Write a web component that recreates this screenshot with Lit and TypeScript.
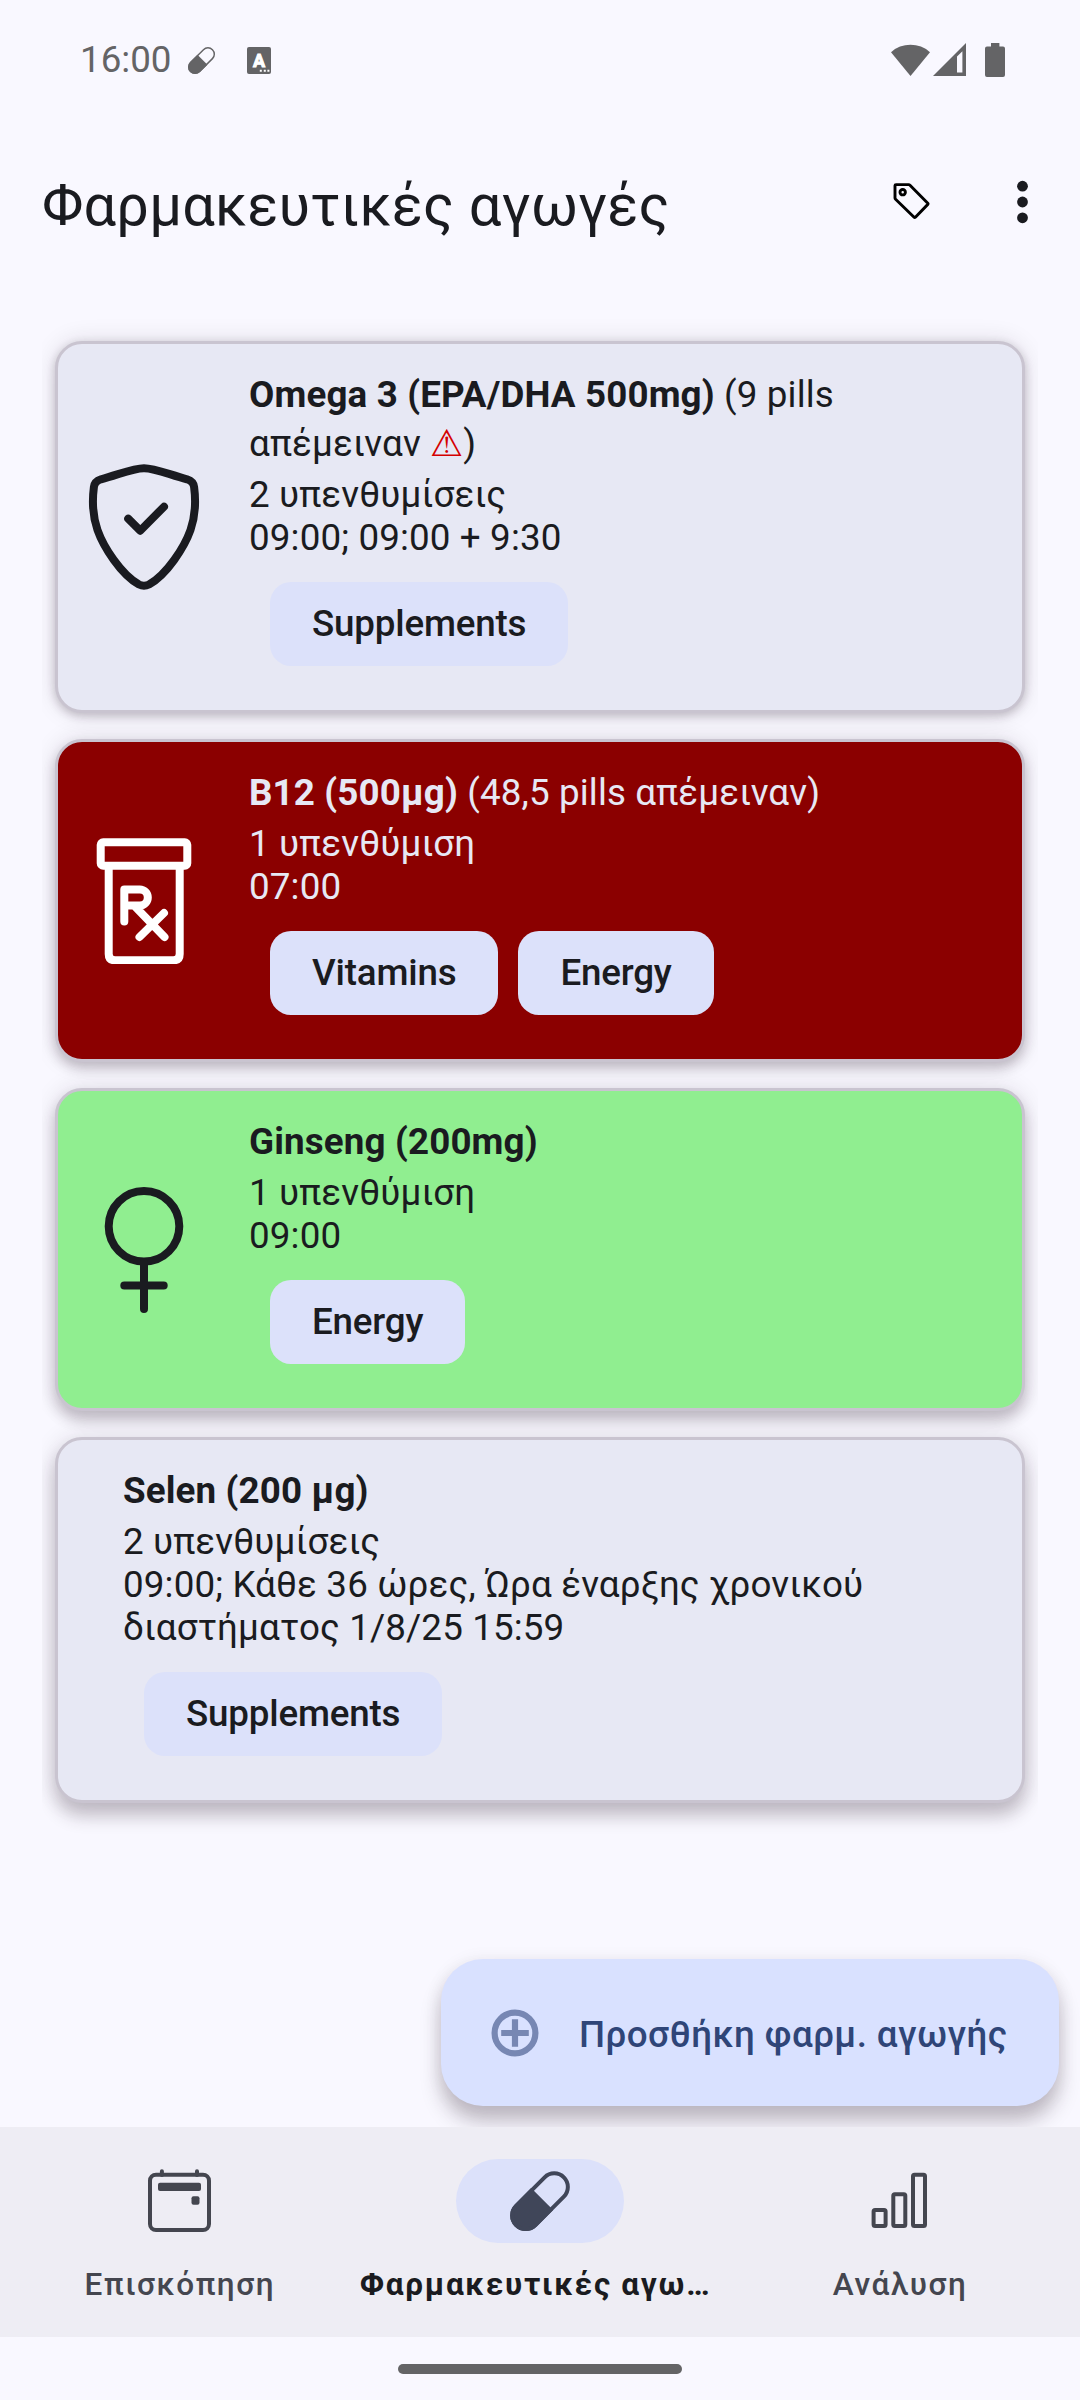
import { LitElement, html, svg, css, nothing } from "lit";
import { customElement, property } from "lit/decorators.js";
import { classMap } from "lit/directives/class-map.js";

type IconName = "shield" | "bottle" | "female" | "none";

interface Medicine {
  name: string;
  stock?: string;
  warning?: boolean;
  reminders: string;
  times: string;
  tags: string[];
  icon: IconName;
  tone: string;
}

const medicines: Medicine[] = [
  {
    name: "Omega 3 (EPA/DHA 500mg)",
    stock: "9 pills απέμειναν",
    warning: true,
    reminders: "2 υπενθυμίσεις",
    times: "09:00; 09:00 + 9:30",
    tags: ["Supplements"],
    icon: "shield",
    tone: "plain lift1",
  },
  {
    name: "B12 (500µg)",
    stock: "48,5 pills απέμειναν",
    reminders: "1 υπενθύμιση",
    times: "07:00",
    tags: ["Vitamins", "Energy"],
    icon: "bottle",
    tone: "red lift2",
  },
  {
    name: "Ginseng (200mg)",
    reminders: "1 υπενθύμιση",
    times: "09:00",
    tags: ["Energy"],
    icon: "female",
    tone: "green lift3",
  },
  {
    name: "Selen (200 µg)",
    reminders: "2 υπενθυμίσεις",
    times: "09:00; Κάθε 36 ώρες, Ώρα έναρξης χρονικού διαστήματος 1/8/25 15:59",
    tags: ["Supplements"],
    icon: "none",
    tone: "plain lift4",
  },
];

const capsule = (stroke: number) => svg`
  <g transform="translate(32 32.2) rotate(-45)">
    <path d="M3 -15.6H-20.15a15.6 15.6 0 0 0 0 31.2H3Z" fill="currentColor"></path>
    <rect x=${-35.75 + stroke / 2} y=${-15.6 + stroke / 2} width=${71.5 - stroke} height=${31.2 - stroke}
      rx=${15.6 - stroke / 2} fill="none" stroke="currentColor" stroke-width=${stroke}></rect>
  </g>`;

const medicineIcons = {
  shield: svg`
    <path d="M63 4.2C52 4.2 38 10.500 20 15.300C15.500 16.800 13.300 19.500 12.900 23C11.200 36 11 50 16.500 66C22.500 83 40 110.500 58 120.500Q63 123 68 120.500C86 110.500 103.500 83 109.500 66C115 50 114.800 36 113.100 23C112.700 19.500 110.500 16.800 106 15.300C88 10.500 74 4.200 63 4.200Z"></path>
    <path d="M47.2 54.700L59.200 66.700L83 42.700"></path>`,
  bottle: svg`
    <rect x="19.700" y="4.300" width="86.600" height="23.400" rx="2.500"></rect>
    <path d="M27.700 28V116Q27.700 122.300 34 122.300H92.400Q98.700 122.300 98.700 116V28"></path>
    <path d="M43.300 83.500V51.500H58.800a8 8 0 0 1 0 16H43.300M54 68.500L83.500 99M83 75L58.500 99"></path>`,
  female: svg`
    <circle cx="63" cy="39.300" r="35.300"></circle>
    <path d="M63 75V122M43.300 98.600H82.700"></path>`,
};

@customElement("status-bar")
class StatusBar extends LitElement {
  static styles = css`
    :host {
      display: flex;
      align-items: center;
      box-sizing: border-box;
      height: 128px;
      padding: 38px 75px 47px 80px;
      color: #646466;
      font-size: 36.75px;
      line-height: 43px;
    }
    .pill {
      width: 29px;
      height: 29px;
      margin: 1px 0 0 15px;
    }
    .app {
      width: 24px;
      height: 27px;
      margin: 1px auto 0 31px;
    }
    .letter {
      font: 700 18px Roboto, sans-serif;
    }
    .signal {
      margin: 0 19px 0 3px;
    }
  `;
  render() {
    return html`
      <span>16:00</span>
      <svg class="pill" viewBox="0 0 64 64">${capsule(3.2)}</svg>
      <svg class="app" viewBox="0 0 24 27">
        <rect width="24" height="27" rx="2" fill="currentColor"></rect>
        <text class="letter" x="12" y="19.5" text-anchor="middle" fill="#fff" stroke="#fff" stroke-width="1">A</text>
        <path d="M12.8 22.7h2v2h-2zM16.8 22.7h2v2h-2zM20.4 22.7h2v2h-2z" fill="#fff"></path>
      </svg>
      <svg width="39" height="34" viewBox="0 0 39 34">
        <path d="M19.5 33L0 9.2A29 29 0 0 1 39 9.2Z" fill="currentColor"></path>
      </svg>
      <svg class="signal" width="33" height="34" viewBox="0 0 33 34">
        <path fill-rule="evenodd" d="M0 33L33 0V33ZM24 13.6V29.6H29.4V8.2Z" fill="currentColor"></path>
      </svg>
      <svg width="20" height="34" viewBox="0 0 20 34">
        <path d="M6 0h8.4v3.6H18a2 2 0 0 1 2 2V32a2 2 0 0 1-2 2H2a2 2 0 0 1-2-2V5.600a2 2 0 0 1 2-2H6Z" fill="currentColor"></path>
      </svg>
    `;
  }
}

@customElement("medicine-card")
class MedicineCard extends LitElement {
  @property({ attribute: false }) item!: Medicine;

  static styles = css`
    :host {
      display: block;
    }
    .card {
      display: flex;
      align-items: center;
      box-sizing: border-box;
      border: 3px solid #c9c4d0;
      border-radius: 27px;
      padding: 29px 40px 44px 23px;
      background: #e7e8f4;
      color: #1a1b20;
      font-size: 36.75px;
      line-height: 43px;
      letter-spacing: 0.14px;
    }
    .red {
      background: #8b0000;
      color: #e7e8f4;
    }
    .green {
      background: #90ee90;
    }
    .lift1 {
      box-shadow: 0 3px 10px rgba(40, 25, 40, 0.24), 0 0 24px rgba(40, 25, 40, 0.12);
    }
    .lift2 {
      box-shadow: 0 6px 12px rgba(40, 25, 40, 0.24), 0 0 24px rgba(40, 25, 40, 0.12);
    }
    .lift3 {
      box-shadow: 0 9px 14px rgba(40, 25, 40, 0.24), 0 0 24px rgba(40, 25, 40, 0.12);
    }
    .lift4 {
      box-shadow: 0 13px 18px rgba(40, 25, 40, 0.24), 0 0 24px rgba(40, 25, 40, 0.12);
    }
    .icon {
      flex: none;
      width: 126px;
      height: 126px;
      margin: 15px 42px 0 0;
      fill: none;
      stroke: currentColor;
      stroke-width: 8;
      stroke-linecap: round;
      stroke-linejoin: round;
    }
    .red .icon {
      color: #fff;
    }
    .body {
      flex: 1;
      min-width: 0;
    }
    .solo {
      padding-left: 42px;
    }
    .name {
      margin-bottom: 8px;
    }
    .warn {
      display: inline-block;
      padding-top: 6px;
      color: #d50000;
    }
    .tags {
      display: flex;
      gap: 20px;
      margin: 23px 0 0 21px;
    }
    .tag {
      padding: 20px 42px 21px;
      border-radius: 21px;
      background: #dce1fa;
      color: #1a1b20;
      font-weight: 500;
      letter-spacing: -0.19px;
    }
  `;

  render() {
    const m = this.item;
    const stock = m.stock
      ? html` (${m.stock}${m.warning ? html` <span class="warn">⚠</span>` : nothing})`
      : nothing;
    return html`
      <div class="card ${m.tone}">
        ${m.icon === "none"
          ? nothing
          : html`<svg class="icon" viewBox="0 0 126 126">${medicineIcons[m.icon]}</svg>`}
        <div class=${classMap({ body: true, solo: m.icon === "none" })}>
          <div class="name"><b>${m.name}</b>${stock}</div>
          <div>${m.reminders}</div>
          <div>${m.times}</div>
          <div class="tags">${m.tags.map((t) => html`<span class="tag">${t}</span>`)}</div>
        </div>
      </div>
    `;
  }
}

@customElement("nav-bar")
class NavBar extends LitElement {
  static styles = css`
    :host {
      display: flex;
      box-sizing: border-box;
      height: 210px;
      padding-top: 32px;
      background: #eeedf4;
      color: #44464f;
    }
    .item {
      flex: 1 1 0;
      display: flex;
      flex-direction: column;
      align-items: center;
      font-size: 31.5px;
      font-weight: 500;
      line-height: 37px;
      letter-spacing: 1.6px;
      white-space: nowrap;
    }
    .holder {
      display: flex;
      align-items: center;
      justify-content: center;
      width: 168px;
      height: 84px;
      margin-bottom: 23px;
      border-radius: 42px;
    }
    .active .holder {
      background: #dce1fa;
      color: #404659;
    }
    .active {
      color: #1a1b20;
      font-weight: 700;
      letter-spacing: 1.72px;
    }
    .active span {
      padding-right: 9px;
    }
  `;
  render() {
    return html`
      <div class="item">
        <div class="holder">
          <svg width="64" height="64" viewBox="0 0 64 64">
            <rect x="2" y="5.700" width="59" height="55.300" rx="6" fill="none" stroke="currentColor" stroke-width="4"></rect>
            <path d="M13.900 2.200V6M49 2.200V6" stroke="currentColor" stroke-width="4" stroke-linecap="round"></path>
            <rect x="10" y="13.700" width="43" height="8.300" rx="2" fill="currentColor"></rect>
            <rect x="43.500" y="27.300" width="8" height="8.400" rx="2" fill="currentColor"></rect>
          </svg>
        </div>
        <span>Επισκόπηση</span>
      </div>
      <div class="item active">
        <div class="holder">
          <svg width="64" height="64" viewBox="0 0 64 64">${capsule(4)}</svg>
        </div>
        <span>Φαρμακευτικές αγω…</span>
      </div>
      <div class="item">
        <div class="holder">
          <svg width="64" height="64" viewBox="0 0 64 64" fill="none" stroke="currentColor" stroke-width="4">
            <rect x="5.600" y="41" width="12" height="16" rx="1.500"></rect>
            <rect x="25.300" y="25.300" width="12" height="31.700" rx="1.500"></rect>
            <rect x="45" y="5.700" width="12" height="51.300" rx="1.500"></rect>
          </svg>
        </div>
        <span>Ανάλυση</span>
      </div>
    `;
  }
}

@customElement("app-root")
class AppRoot extends LitElement {
  static styles = css`
    :host {
      display: flex;
      flex-direction: column;
      position: relative;
      box-sizing: border-box;
      width: 1080px;
      height: 2400px;
      overflow: hidden;
      background: #f9f8ff;
      font-family: Roboto, sans-serif;
      color: #1a1b20;
    }
    .top {
      display: flex;
      align-items: center;
      height: 147px;
      padding: 0 34px 0 42px;
    }
    .title {
      flex: 1;
      margin: 6px 0 0;
      font-size: 57.75px;
      font-weight: 400;
      line-height: 68px;
      letter-spacing: 0.16px;
      white-space: nowrap;
    }
    .tagicon {
      margin-right: 83px;
      fill: none;
      stroke: #000;
      stroke-width: 2.9;
      stroke-linejoin: round;
    }
    .list {
      flex: 1;
      display: flex;
      flex-direction: column;
      gap: 26px;
      margin: 0 42px;
      padding: 66px 13px 0;
      overflow-x: clip;
    }
    .fab {
      position: absolute;
      right: 21px;
      bottom: 294px;
      display: flex;
      align-items: center;
      box-sizing: border-box;
      width: 618px;
      height: 147px;
      padding-left: 50px;
      border-radius: 42px;
      background: #d9e1ff;
      color: #2f4578;
      font-size: 36.75px;
      font-weight: 500;
      line-height: 43px;
      letter-spacing: 0.44px;
      white-space: nowrap;
      box-shadow: 0 16px 20px rgba(40, 25, 40, 0.26), 0 2px 18px rgba(40, 25, 40, 0.08);
    }
    .fab span {
      margin-top: 4px;
    }
    .plus {
      margin-right: 40px;
      fill: none;
      stroke: #7787b3;
      stroke-width: 6.2;
    }
    .nav {
      position: relative;
    }
    .gesture {
      display: flex;
      align-items: center;
      justify-content: center;
      height: 63px;
    }
    .handle {
      width: 284px;
      height: 10px;
      margin-top: 1px;
      border-radius: 5px;
      background: #646466;
    }
  `;

  render() {
    return html`
      <status-bar></status-bar>
      <header class="top">
        <h1 class="title">Φαρμακευτικές αγωγές</h1>
        <svg class="tagicon" width="42" height="42" viewBox="0 0 42 42">
          <path d="M5 3.600H17.600Q18.400 3.600 19 4.200L36.800 22.200Q37.400 22.800 36.800 23.400L24.400 36.200Q23.700 36.800 23.100 36.200L4.600 18.300Q4 17.700 4 17V4.600Q4 3.600 5 3.600Z"></path>
          <circle cx="11.700" cy="11.200" r="2.700"></circle>
        </svg>
        <svg width="30" height="48" viewBox="0 0 30 48">
          <circle cx="6.500" cy="8.200" r="5.400" fill="#1a1b20"></circle>
          <circle cx="6.500" cy="24" r="5.400" fill="#1a1b20"></circle>
          <circle cx="6.500" cy="39.800" r="5.400" fill="#1a1b20"></circle>
        </svg>
      </header>
      <main class="list">
        ${medicines.map((m) => html`<medicine-card .item=${m}></medicine-card>`)}
      </main>
      <div class="fab">
        <svg class="plus" width="48" height="48" viewBox="0 0 48 48">
          <circle cx="24" cy="24" r="20.400"></circle>
          <path d="M10.200 24H37.800M24 10.200V37.800"></path>
        </svg>
        <span>Προσθήκη φαρμ. αγωγής</span>
      </div>
      <nav-bar class="nav"></nav-bar>
      <div class="gesture"><div class="handle"></div></div>
    `;
  }
}
